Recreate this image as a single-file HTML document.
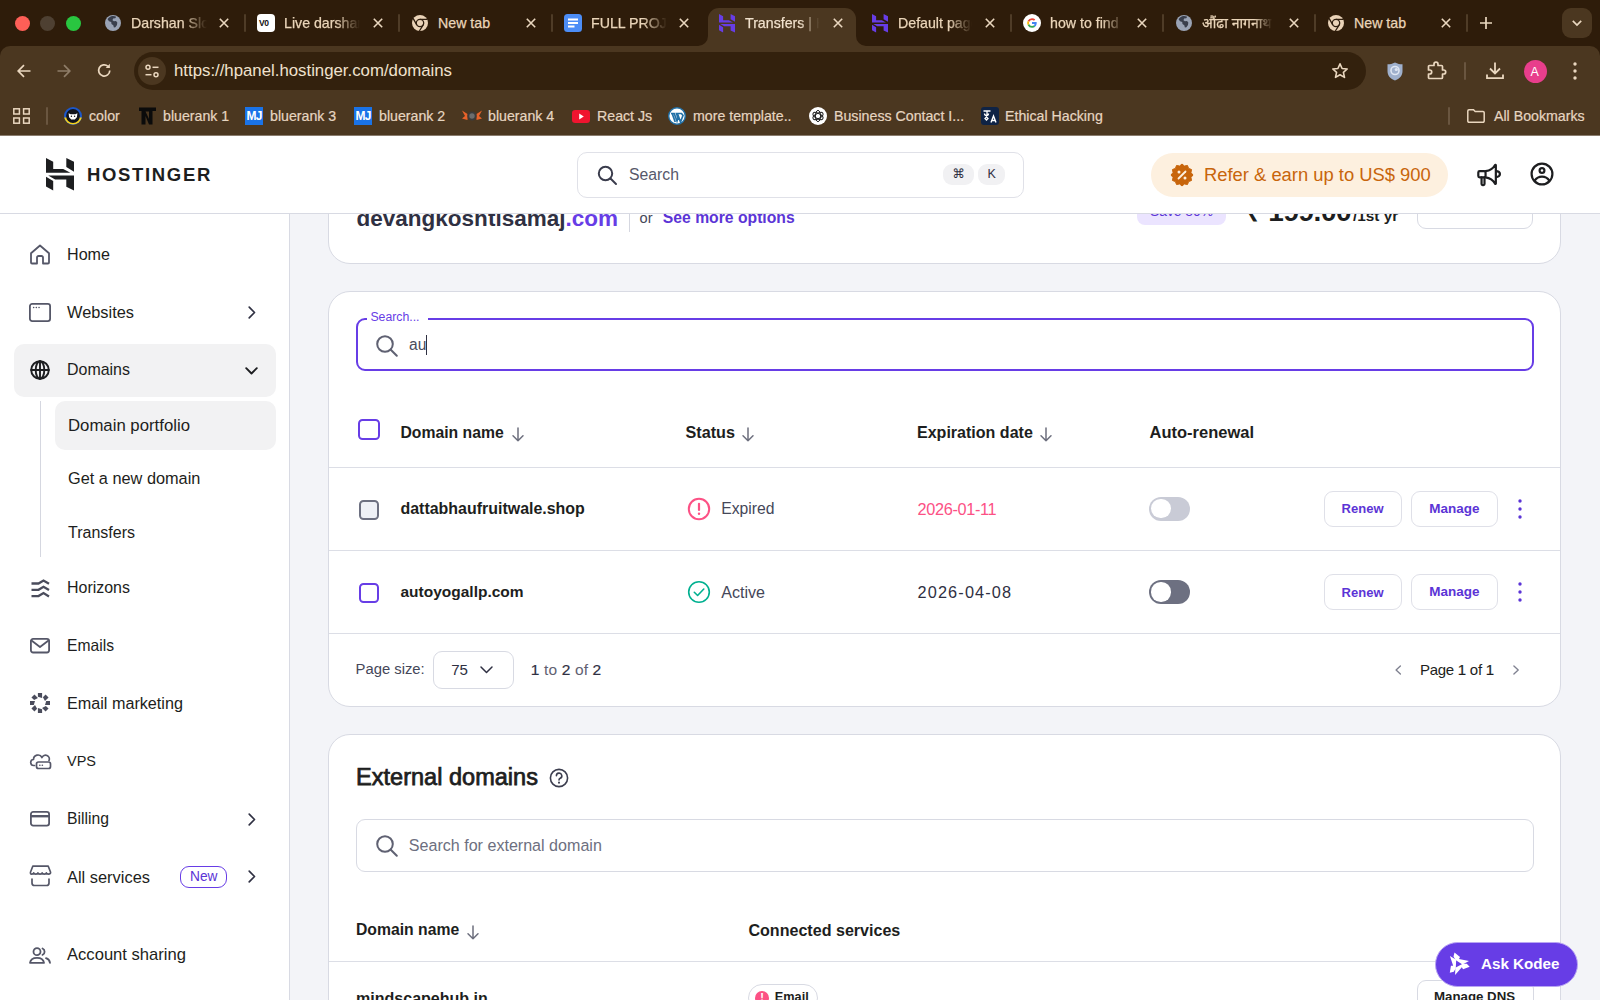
<!DOCTYPE html>
<html lang="en">
<head>
<meta charset="utf-8">
<title>Transfers | Hostinger</title>
<style>
*{box-sizing:border-box;margin:0;padding:0}
html,body{width:1600px;height:1000px;overflow:hidden;background:#f3f4f8}
body{position:relative;font-family:"Liberation Sans","Noto Sans CJK SC",sans-serif;color:#1d1e20;-webkit-font-smoothing:antialiased}
.abs{position:absolute}
.t{position:absolute;white-space:nowrap;line-height:1}
svg{position:absolute;overflow:visible}
/* ---------- browser chrome ---------- */
#tabstrip{position:absolute;left:0;top:0;width:1600px;height:60px;background:#2e1c0a}
#toolbar{position:absolute;left:0;top:46px;width:1600px;height:90px;background:#4b3720;border-radius:10px 10px 0 0}
#chromeline{position:absolute;left:0;top:135px;width:1600px;height:1px;background:#8a7c6d}
.ct{position:absolute;white-space:nowrap;line-height:1;font-size:14.2px;color:#ead5b9;-webkit-text-stroke:.25px #ead5b9;top:16px;overflow:hidden;height:16px}
.cx{position:absolute;top:17px;width:11px;height:11px}
.sep{position:absolute;top:14px;width:2px;height:18px;background:#4f3c27;border-radius:1px}
.bm{position:absolute;white-space:nowrap;line-height:1;font-size:14.2px;color:#e6d5c0;-webkit-text-stroke:.2px #e6d5c0;top:108px}
/* ---------- page ---------- */
#header{position:absolute;left:0;top:136px;width:1600px;height:78px;background:#fff;border-bottom:1px solid #d8dae3}
#sidebar{position:absolute;left:0;top:214px;width:290px;height:786px;background:#fff;border-right:1px solid #d8dae3}
.nav{position:absolute;left:67px;white-space:nowrap;line-height:1;font-size:16.3px;color:#1d1e20}
.sub{position:absolute;left:68px;white-space:nowrap;line-height:1;font-size:16.3px;color:#1d1e20}
.card{position:absolute;left:328px;width:1233px;background:#fff;border:1px solid #dadce5;border-radius:22px}
.hline{position:absolute;left:329px;width:1231px;height:1px;background:#dcdee6}
.b{font-weight:700}
#main{position:absolute;left:0;top:0;width:1600px;height:1000px;overflow:hidden}
</style>
</head>
<body>
<!-- PAGE -->
<div id="main">
<div class="abs" style="left:328px;top:150px;width:1233px;height:113.5px;background:#fff;border:1px solid #d8dae3;border-radius:22px"></div>
<div class="t" style="left:356.5px;top:208.4px;font-size:22.5px;font-weight:700;color:#2f3042;letter-spacing:0.009px;">devangkoshtisamaj<span style="color:#673de6">.com</span></div>
<div class="abs" style="left:628.5px;top:205px;width:1.0px;height:26.5px;background:#d5d7e0"></div>
<div class="t" style="left:639.5px;top:210.9px;font-size:14.62px;font-weight:400;color:#454759;">or</div>
<div class="t" style="left:662.8px;top:210.4px;font-size:15.72px;font-weight:700;color:#5b34d6;">See more options</div>
<div class="abs" style="left:1137px;top:196px;width:89px;height:28.5px;background:#ebe4ff;border-radius:8px"></div>
<div class="t" style="left:1150px;top:204.8px;font-size:13.82px;font-weight:400;color:#5b34d6;">Save 80%</div>
<div class="t" style="left:1245.5px;top:198.2px;font-size:28px;font-weight:700;color:#1d1e20;letter-spacing:-0.482px;">₹ 199.00</div>
<div class="t" style="left:1353px;top:207.5px;font-size:15.37px;font-weight:700;color:#1d1e20;">/1st yr</div>
<div class="abs" style="left:1417px;top:185px;width:116px;height:44px;border:1px solid #d8dae3;border-radius:9px;background:#fff"></div>
<div class="abs" style="left:328px;top:291px;width:1233px;height:415.5px;background:#fff;border:1px solid #d8dae3;border-radius:22px"></div>
<div class="abs" style="left:355.5px;top:317.8px;width:1178.0px;height:53.39999999999998px;border:2px solid #673de6;border-radius:9px;background:#fff"></div>
<div class="abs" style="left:366.5px;top:316px;width:61.0px;height:6px;background:#fff"></div>
<div class="t" style="left:370.4px;top:311.2px;font-size:12.27px;font-weight:400;color:#673de6;">Search...</div>
<svg style="left:375.5px;top:334.5px" width="22" height="22" viewBox="0 0 22 22" fill="none" stroke="#5f6172" stroke-width="2" stroke-linecap="round" stroke-linejoin="round"><circle cx="9" cy="9" r="7.800"/><path d="M14.800 14.800L20.800 20.800"/></svg>
<div class="t" style="left:409px;top:337.4px;font-size:15.6px;font-weight:400;color:#4a4c5c;">au</div>
<div class="abs" style="left:426px;top:335px;width:1.3000000000000114px;height:19.5px;background:#2f3042"></div>
<div class="abs" style="left:358px;top:418.5px;width:21.5px;height:21.5px;border:2px solid #673de6;border-radius:4.500px;background:#fff"></div>
<div class="t" style="left:400.5px;top:424.5px;font-size:15.74px;font-weight:700;color:#1d1e20;">Domain name</div>
<svg style="left:511.79999999999995px;top:427.0px" width="12" height="15" viewBox="0 0 12 15" fill="none" stroke="#6d6f7e" stroke-width="1.500" stroke-linecap="round" stroke-linejoin="round"><path d="M6 1V13.800M1 8.800L6 13.800 11 8.800"/></svg>
<div class="t" style="left:685.5px;top:424.3px;font-size:16.2px;font-weight:700;color:#1d1e20;">Status</div>
<svg style="left:742.3px;top:427.0px" width="12" height="15" viewBox="0 0 12 15" fill="none" stroke="#6d6f7e" stroke-width="1.500" stroke-linecap="round" stroke-linejoin="round"><path d="M6 1V13.800M1 8.800L6 13.800 11 8.800"/></svg>
<div class="t" style="left:917px;top:424.4px;font-size:16.05px;font-weight:700;color:#1d1e20;">Expiration date</div>
<svg style="left:1040.3px;top:427.0px" width="12" height="15" viewBox="0 0 12 15" fill="none" stroke="#6d6f7e" stroke-width="1.500" stroke-linecap="round" stroke-linejoin="round"><path d="M6 1V13.800M1 8.800L6 13.800 11 8.800"/></svg>
<div class="t" style="left:1149.5px;top:424.2px;font-size:16.5px;font-weight:700;color:#1d1e20;">Auto-renewal</div>
<div class="hline" style="top:467px"></div><div class="hline" style="top:550px"></div><div class="hline" style="top:633px"></div>
<div class="abs" style="left:359px;top:499.7px;width:20px;height:20.000000000000057px;border:2px solid #6d7081;border-radius:4.500px;background:#eef0f6"></div>
<div class="t" style="left:400.5px;top:500.6px;font-size:15.96px;font-weight:700;color:#1d1e20;">dattabhaufruitwale.shop</div>
<svg style="left:686.7px;top:496.7px" width="24" height="24" viewBox="0 0 24 24" fill="none" stroke="#fc5185" stroke-width="2" stroke-linecap="round" stroke-linejoin="round"><circle cx="12" cy="12" r="10.200"/><path d="M12 6.800V13" stroke-width="2.200"/><path d="M12 16.600v.1" stroke-width="2.400"/></svg>
<div class="t" style="left:721.2px;top:500.8px;font-size:15.72px;font-weight:400;color:#454759;">Expired</div>
<div class="t" style="left:917.5px;top:500.5px;font-size:16.3px;font-weight:400;color:#fc5185;letter-spacing:-0.329px;">2026-01-11</div>
<div class="abs" style="left:1149px;top:496.5px;width:41px;height:24.399999999999977px;background:#c9cbd6;border-radius:12.500px"></div>
<div class="abs" style="left:1151.3px;top:499.0px;width:19.40000000000009px;height:19.399999999999977px;background:#fff;border-radius:50%"></div>
<div class="abs" style="left:1323.5px;top:491.0px;width:78.0px;height:35.5px;border:1px solid #dfe0e8;border-radius:9px;background:#fff"></div>
<div class="t" style="left:1341.6px;top:502.4px;font-size:13.0px;font-weight:700;color:#5b34d6;">Renew</div>
<div class="abs" style="left:1411px;top:491.0px;width:86.5px;height:35.5px;border:1px solid #dfe0e8;border-radius:9px;background:#fff"></div>
<div class="t" style="left:1429.2px;top:502.1px;font-size:13.51px;font-weight:700;color:#5b34d6;">Manage</div>
<svg style="left:1517.8px;top:498.7px" width="4" height="20" viewBox="0 0 4 20"><circle cx="2" cy="2" r="1.700" fill="#5b34d6"/><circle cx="2" cy="10" r="1.700" fill="#5b34d6"/><circle cx="2" cy="18" r="1.700" fill="#5b34d6"/></svg>
<div class="abs" style="left:359px;top:583px;width:20px;height:20px;border:2px solid #673de6;border-radius:4.500px;background:#fff"></div>
<div class="t" style="left:400.5px;top:584.2px;font-size:15.49px;font-weight:700;color:#1d1e20;">autoyogallp.com</div>
<svg style="left:686.7px;top:580.0px" width="24" height="24" viewBox="0 0 24 24" fill="none" stroke="#00b090" stroke-width="1.6" stroke-linecap="round" stroke-linejoin="round"><circle cx="12" cy="12" r="10.300"/><path d="M7.300 12.300L10.600 15.500 16.800 9"/></svg>
<div class="t" style="left:721.2px;top:583.9px;font-size:16.08px;font-weight:400;color:#454759;">Active</div>
<div class="t" style="left:917.5px;top:583.8px;font-size:16.3px;font-weight:400;color:#2f3042;letter-spacing:1.147px;">2026-04-08</div>
<div class="abs" style="left:1149px;top:579.8px;width:41px;height:24.40000000000009px;background:#6d7081;border-radius:12.500px"></div>
<div class="abs" style="left:1151.3px;top:582.3px;width:19.40000000000009px;height:19.40000000000009px;background:#fff;border-radius:50%"></div>
<div class="abs" style="left:1323.5px;top:574.3px;width:78.0px;height:35.5px;border:1px solid #dfe0e8;border-radius:9px;background:#fff"></div>
<div class="t" style="left:1341.6px;top:585.7px;font-size:13.0px;font-weight:700;color:#5b34d6;">Renew</div>
<div class="abs" style="left:1411px;top:574.3px;width:86.5px;height:35.5px;border:1px solid #dfe0e8;border-radius:9px;background:#fff"></div>
<div class="t" style="left:1429.2px;top:585.4px;font-size:13.51px;font-weight:700;color:#5b34d6;">Manage</div>
<svg style="left:1517.8px;top:582px" width="4" height="20" viewBox="0 0 4 20"><circle cx="2" cy="2" r="1.700" fill="#5b34d6"/><circle cx="2" cy="10" r="1.700" fill="#5b34d6"/><circle cx="2" cy="18" r="1.700" fill="#5b34d6"/></svg>
<div class="t" style="left:355.5px;top:662.3px;font-size:14.84px;font-weight:400;color:#454759;">Page size:</div>
<div class="abs" style="left:433px;top:651.2px;width:81px;height:37.59999999999991px;border:1px solid #d8dae3;border-radius:9px;background:#fff"></div>
<div class="t" style="left:451.2px;top:662.2px;font-size:15.1px;font-weight:400;color:#2f3042;">75</div>
<svg style="left:480px;top:666px" width="13" height="8" viewBox="0 0 13 8"><path d="M1 1L6.500 6.500 12 1" stroke="#2f3042" stroke-width="1.500" fill="none" stroke-linecap="round" stroke-linejoin="round"/></svg>
<div class="t" style="left:530.8px;top:662.0px;font-size:15.5px;font-weight:400;color:#5f6172;letter-spacing:0.145px;"><span style="color:#2f3042;-webkit-text-stroke:.22px #2f3042">1</span> to <span style="color:#2f3042;-webkit-text-stroke:.22px #2f3042">2</span> of <span style="color:#2f3042;-webkit-text-stroke:.22px #2f3042">2</span></div>
<svg style="left:1395px;top:665px" width="6.300" height="9.900" viewBox="0 0 7 11"><path d="M6 1L1.200 5.500 6 10" stroke="#7f8190" stroke-width="1.500" fill="none" stroke-linecap="round" stroke-linejoin="round"/></svg>
<svg style="left:1512.500px;top:665px" width="6.300" height="9.900" viewBox="0 0 7 11"><path d="M1 1L5.800 5.500 1 10" stroke="#7f8190" stroke-width="1.500" fill="none" stroke-linecap="round" stroke-linejoin="round"/></svg>
<div class="t" style="left:1420px;top:662.2px;font-size:15px;font-weight:400;color:#1d1e20;letter-spacing:-0.273px;">Page <span style="-webkit-text-stroke:.22px #1d1e20">1</span> of <span style="-webkit-text-stroke:.22px #1d1e20">1</span></div>
<div class="abs" style="left:328px;top:734px;width:1233px;height:306px;background:#fff;border:1px solid #d8dae3;border-radius:22px"></div>
<div class="t" style="left:356px;top:766.0px;font-size:23.5px;font-weight:400;color:#1d1e20;-webkit-text-stroke:.75px #1d1e20;letter-spacing:0.026px;">External domains</div>
<svg style="left:548.8px;top:767.8px" width="20" height="20" viewBox="0 0 20 20" fill="none" stroke="#3c3e4f" stroke-width="1.6" stroke-linecap="round" stroke-linejoin="round"><circle cx="10" cy="10" r="8.600"/><path d="M7.400 7.800a2.700 2.700 0 1 1 3.800 2.500c-.8.400-1.200.9-1.200 1.700"/><path d="M10 14.600v.1" stroke-width="2"/></svg>
<div class="abs" style="left:356px;top:819.2px;width:1177.5px;height:52.799999999999955px;border:1px solid #d8dae3;border-radius:9px;background:#fff"></div>
<svg style="left:375.5px;top:835.0px" width="22" height="22" viewBox="0 0 22 22" fill="none" stroke="#5f6172" stroke-width="2" stroke-linecap="round" stroke-linejoin="round"><circle cx="9" cy="9" r="7.800"/><path d="M14.800 14.800L20.800 20.800"/></svg>
<div class="t" style="left:408.8px;top:836.8px;font-size:16.09px;font-weight:400;color:#6d6f80;">Search for external domain</div>
<div class="t" style="left:356px;top:922.1px;font-size:15.74px;font-weight:700;color:#1d1e20;">Domain name</div>
<svg style="left:467.2px;top:924.5px" width="12" height="15" viewBox="0 0 12 15" fill="none" stroke="#6d6f7e" stroke-width="1.500" stroke-linecap="round" stroke-linejoin="round"><path d="M6 1V13.800M1 8.800L6 13.800 11 8.800"/></svg>
<div class="t" style="left:748.4px;top:922.0px;font-size:16.08px;font-weight:700;color:#1d1e20;">Connected services</div>
<div class="hline" style="top:961px"></div>
<div class="t" style="left:356px;top:989.7px;font-size:16.05px;font-weight:700;color:#1d1e20;">mindscapehub.in</div>
<div class="abs" style="left:748.4px;top:984px;width:69.60000000000002px;height:28px;border:1px solid #d8dae3;border-radius:14px;background:#fff"></div>
<div class="abs" style="left:754.5px;top:990.5px;width:14.0px;height:14.0px;background:#fc5185;border-radius:50%"></div>
<div class="t" style="left:760.3px;top:992.1px;font-size:11px;font-weight:700;color:#fff;">!</div>
<div class="t" style="left:774.8px;top:990.8px;font-size:12.74px;font-weight:700;color:#1d1e20;">Email</div>
<div class="abs" style="left:1417px;top:980px;width:116.5px;height:40px;border:1px solid #d8dae3;border-radius:9px;background:#fff"></div>
<div class="t" style="left:1434px;top:990.0px;font-size:13.28px;font-weight:700;color:#1d1e20;">Manage DNS</div>
<div class="abs" style="left:1434.7px;top:941.5px;width:143.79999999999995px;height:45.200000000000045px;background:#673de6;border-radius:22.600px;border:1px solid #b9a6f3"></div>
<svg style="left:1445.800px;top:952.300px" width="24" height="24" viewBox="-12 -12 24 24" fill="#fff"><path d="M-3.500 -11.500L2 -7 1 -5 11 -3 4.500 0.500 -2.500 -4 -4.500 -7.500z"/><path d="M-3.500 -11.500L2 -7 1 -5 11 -3 4.500 0.500 -2.500 -4 -4.500 -7.500z" transform="rotate(120)"/><path d="M-3.500 -11.500L2 -7 1 -5 11 -3 4.500 0.500 -2.500 -4 -4.500 -7.500z" transform="rotate(240)"/></svg>
<div class="t" style="left:1481px;top:955.8px;font-size:15.19px;font-weight:700;color:#fff;">Ask Kodee</div>
</div>
<div id="sidebar">
<div class="abs" style="left:14px;top:129.5px;width:261.600px;height:53px;border-radius:10px;background:#f2f2f3"></div>
<div class="abs" style="left:55px;top:187px;width:220.600px;height:48.500px;border-radius:10px;background:#f2f2f3"></div>
<div class="abs" style="left:40px;top:187px;width:1px;height:156px;background:#d5d7e0"></div>
<div class="t" style="left:67px;top:32.4px;font-size:16.12px;font-weight:400;color:#1d1e20;">Home</div>
<div class="t" style="left:67px;top:90.2px;font-size:16.36px;font-weight:400;color:#1d1e20;">Websites</div>
<div class="t" style="left:67px;top:148.4px;font-size:15.96px;font-weight:400;color:#1d1e20;">Domains</div>
<div class="t" style="left:67px;top:366.4px;font-size:15.96px;font-weight:400;color:#1d1e20;">Horizons</div>
<div class="t" style="left:67px;top:423.9px;font-size:15.67px;font-weight:400;color:#1d1e20;">Emails</div>
<div class="t" style="left:67px;top:481.4px;font-size:16.18px;font-weight:400;color:#1d1e20;">Email marketing</div>
<div class="t" style="left:67px;top:540.0px;font-size:14.49px;font-weight:400;color:#1d1e20;">VPS</div>
<div class="t" style="left:67px;top:597.3px;font-size:15.74px;font-weight:400;color:#1d1e20;">Billing</div>
<div class="t" style="left:67px;top:654.6px;font-size:16.42px;font-weight:400;color:#1d1e20;">All services</div>
<div class="t" style="left:67px;top:733.1px;font-size:16.6px;font-weight:400;color:#1d1e20;">Account sharing</div>
<div class="t" style="left:68px;top:204.0px;font-size:16.75px;font-weight:400;color:#1d1e20;">Domain portfolio</div>
<div class="t" style="left:68px;top:256.0px;font-size:16.32px;font-weight:400;color:#1d1e20;">Get a new domain</div>
<div class="t" style="left:68px;top:310.7px;font-size:16.01px;font-weight:400;color:#1d1e20;">Transfers</div>
<svg style="left:247.5px;top:92.0px" width="8" height="13" viewBox="0 0 8 13"><path d="M1.200 1.200L6.500 6.500 1.200 11.800" stroke="#2f3042" stroke-width="1.700" fill="none" stroke-linecap="round" stroke-linejoin="round"/></svg>
<svg style="left:247.5px;top:598.5px" width="8" height="13" viewBox="0 0 8 13"><path d="M1.200 1.200L6.500 6.500 1.200 11.800" stroke="#2f3042" stroke-width="1.700" fill="none" stroke-linecap="round" stroke-linejoin="round"/></svg>
<svg style="left:247.5px;top:656.0px" width="8" height="13" viewBox="0 0 8 13"><path d="M1.200 1.200L6.500 6.500 1.200 11.800" stroke="#2f3042" stroke-width="1.700" fill="none" stroke-linecap="round" stroke-linejoin="round"/></svg>
<svg style="left:245px;top:152.5px" width="13" height="8" viewBox="0 0 13 8"><path d="M1.200 1.200L6.500 6.500 11.800 1.200" stroke="#1d1e20" stroke-width="1.900" fill="none" stroke-linecap="round" stroke-linejoin="round"/></svg>
<div class="abs" style="left:180px;top:652px;width:47px;height:21.500px;border:1.500px solid #673de6;border-radius:9px"></div>
<div class="t" style="left:190px;top:656.0px;font-size:13.74px;font-weight:400;color:#5b34d6;">New</div>
<svg style="left:29.0px;top:29.80000000000001px" width="22" height="21" viewBox="0 0 22 21" fill="none" stroke="#555768" stroke-width="1.8" stroke-linecap="round" stroke-linejoin="round"><path d="M2 9.300L11 1.500 20 9.300V18.500a1 1 0 0 1-1 1H14V13.500a1.500 1.500 0 0 0-1.500-1.500H9.500A1.500 1.500 0 0 0 8 13.500V19.500H3a1 1 0 0 1-1-1z"/></svg>
<svg style="left:29.0px;top:88.80000000000001px" width="22" height="19" viewBox="0 0 22 19" fill="none" stroke="#555768" stroke-width="1.8" stroke-linecap="round" stroke-linejoin="round"><rect x="0.900" y="0.900" width="20.200" height="17.200" rx="2.300"/><path d="M4.600 4.600h.1M7.300 4.600h.1M10 4.600h.1" stroke-width="1.500"/></svg>
<svg style="left:29.0px;top:144.89999999999998px" width="22" height="22" viewBox="0 0 22 22" fill="none" stroke="#1d1e20" stroke-width="1.9" stroke-linecap="round" stroke-linejoin="round"><circle cx="11" cy="11" r="8.800"/><ellipse cx="11" cy="11" rx="4.300" ry="8.800"/><path d="M2.200 11H19.800M11 2.200V19.800"/></svg>
<svg style="left:30.5px;top:364.79999999999995px" width="19" height="19" viewBox="0 0 19 19" fill="none" stroke="#4a4c5c" stroke-width="2.3" stroke-linecap="round" stroke-linejoin="round"><path d="M0.500 4.500H7.500L12.500 1.500 18 4.800M0.500 10.800H7.500L12.500 7.800 18 11.100M0.500 17.100H7.500L12.500 14.100 18 17.400" stroke-linecap="butt" stroke-linejoin="miter"/></svg>
<svg style="left:30.0px;top:423.90000000000003px" width="20" height="15.4" viewBox="0 0 20 15.4" fill="none" stroke="#555768" stroke-width="1.8" stroke-linecap="round" stroke-linejoin="round"><rect x="0.900" y="0.900" width="18.200" height="13.600" rx="2.200"/><path d="M1.500 2.500L10 9 18.500 2.500"/></svg>
<svg style="left:29px;top:478px" width="22" height="22" viewBox="-11 -11 22 22" fill="#4a4c5c"><path d="M-2.100 -10H2.100V-5L-2.100 -6.200z" transform="rotate(0)"/><path d="M-2.100 -10H2.100V-5L-2.100 -6.200z" transform="rotate(45)"/><path d="M-2.100 -10H2.100V-5L-2.100 -6.200z" transform="rotate(90)"/><path d="M-2.100 -10H2.100V-5L-2.100 -6.200z" transform="rotate(135)"/><path d="M-2.100 -10H2.100V-5L-2.100 -6.200z" transform="rotate(180)"/><path d="M-2.100 -10H2.100V-5L-2.100 -6.200z" transform="rotate(225)"/><path d="M-2.100 -10H2.100V-5L-2.100 -6.200z" transform="rotate(270)"/><path d="M-2.100 -10H2.100V-5L-2.100 -6.200z" transform="rotate(315)"/></svg>
<svg style="left:29.5px;top:536.7px" width="21" height="19" viewBox="0 0 21 19" fill="none" stroke="#555768" stroke-width="1.7" stroke-linecap="round" stroke-linejoin="round"><path d="M4.500 14.500H4a3 3 0 0 1-.5-6A4.500 4.500 0 0 1 12 6.500 3.800 3.800 0 0 1 19 9.500"/><rect x="6.500" y="11" width="14" height="6.500" rx="2"/><path d="M9.800 14.300h.1M12.300 14.300h.1" stroke-width="1.600"/></svg>
<svg style="left:29.799999999999997px;top:597.05px" width="20" height="15.5" viewBox="0 0 20 15.5" fill="none" stroke="#555768" stroke-width="1.8" stroke-linecap="round" stroke-linejoin="round"><rect x="0.900" y="0.900" width="18.200" height="13.700" rx="2.300"/><path d="M1 5.200H19" stroke-width="2.400" stroke-linecap="butt"/></svg>
<svg style="left:28.5px;top:651.2px" width="23" height="22" viewBox="0 0 23 22" fill="none" stroke="#555768" stroke-width="1.7" stroke-linecap="round" stroke-linejoin="round"><path d="M3.500 1.200H19.500L22 7.500c0 1.300-1 2-2.200 2s-2.200-.7-2.200-1.300c0 .6-1 1.300-2.200 1.300S13.200 8.800 13.200 8.200c0 .6-1 1.300-2.200 1.300S8.800 8.800 8.800 8.200c0 .6-1 1.300-2.200 1.300S4.400 8.800 4.400 8.200c0 .6-1 1.300-2.200 1.300S1 8.800 1 7.500z" transform="scale(.96) translate(.5 0)"/><path d="M3 14V18a2.500 2.500 0 0 0 2.500 2.500H17.500A2.500 2.500 0 0 0 20 18V14"/></svg>
<svg style="left:29.0px;top:732.8px" width="22" height="17" viewBox="0 0 22 17" fill="none" stroke="#555768" stroke-width="1.8" stroke-linecap="round" stroke-linejoin="round"><circle cx="8" cy="4.700" r="3.500"/><path d="M1 15.800c.5-3.500 3.500-5 7-5s6.500 1.500 7 5z"/><path d="M13.500 1.500a3.500 3.500 0 0 1 0 6.400M17 11.200c2.300.8 3.700 2.300 4 4.600"/></svg>
</div>
<div id="header">
<svg style="left:45.700px;top:22.099999999999994px" width="28" height="32.500" viewBox="0 0 28 32.500" fill="#1d1e20"><path d="M0 0L7.200 3.750V10.900H17.200L24.400 14.700H0z"/><path d="M20.300 0L28 3.750V13.750L20.300 9.100z"/><path d="M28 32.500L20.300 28.750V21.600H9.100L2.200 17.500H28z"/><path d="M0 18.750L7.200 23.100V32.500L0 28.400z"/></svg>
<div class="t" style="left:86.9px;top:29.6px;font-size:18.5px;font-weight:700;color:#1d1e20;letter-spacing:1.676px;">HOSTINGER</div>
<div class="abs" style="left:577px;top:15.5px;width:446.500px;height:46px;border:1px solid #e0e1e8;border-radius:10px;background:#fff"></div>
<svg style="left:596.5px;top:28.5px" width="20" height="20" viewBox="0 0 20 20" fill="none" stroke="#3a3c4c" stroke-width="2" stroke-linecap="round" stroke-linejoin="round"><circle cx="8.500" cy="8.500" r="6.700"/><path d="M13.500 13.500L19 19"/></svg>
<div class="t" style="left:629px;top:30.8px;font-size:15.78px;font-weight:400;color:#56586a;">Search</div>
<div class="abs" style="left:943px;top:27.5px;width:30.500px;height:21.500px;border-radius:9px;background:#f1f1f3"></div>
<div class="abs" style="left:978px;top:27.5px;width:27px;height:21.500px;border-radius:9px;background:#f1f1f3"></div>
<div class="t" style="left:952.500px;top:31.5px;font-size:12.500px;color:#2f3042;font-family:'DejaVu Sans','Liberation Sans',sans-serif">&#8984;</div>
<div class="t" style="left:987.5px;top:32.4px;font-size:12.5px;font-weight:400;color:#2f3042;">K</div>
<div class="abs" style="left:1151px;top:16.5px;width:297px;height:44px;border-radius:22px;background:#fdf0df"></div>
<svg style="left:1171px;top:27.5px" width="22" height="22" viewBox="0 0 22 22"><polygon points="22.00,11.00 19.98,13.41 20.53,16.50 17.58,17.58 16.50,20.53 13.41,19.98 11.00,22.00 8.59,19.98 5.50,20.53 4.42,17.58 1.47,16.50 2.02,13.41 0.00,11.00 2.02,8.59 1.47,5.50 4.42,4.42 5.50,1.47 8.59,2.02 11.00,0.00 13.41,2.02 16.50,1.47 17.58,4.42 20.53,5.50 19.98,8.59" fill="#c8650b" stroke="#c8650b" stroke-width="1" stroke-linejoin="round"/><path d="M14.500 7.500L7.500 14.500" stroke="#fdf0df" stroke-width="1.800" stroke-linecap="round"/><circle cx="8" cy="8" r="1.500" fill="#fdf0df"/><circle cx="14" cy="14" r="1.500" fill="#fdf0df"/></svg>
<div class="t" style="left:1204px;top:29.6px;font-size:18.39px;font-weight:400;color:#c8650b;">Refer &amp; earn up to US$ 900</div>
<svg style="left:1475.6499999999999px;top:25.800000000000004px" width="27.3" height="25.2" viewBox="0 0 26 24" fill="none" stroke="#1d1e20" stroke-width="2.1" stroke-linecap="round" stroke-linejoin="round"><rect x="2.200" y="8.700" width="6.900" height="5.900" rx="1.300"/><path d="M5.300 14.600V21a1 1 0 0 0 1 1H7.100a1 1 0 0 0 1-1V14.600"/><path d="M9.100 8.700C13 8.200 16.500 6 18.200 2.900a.4.400 0 0 1 .7.200V20.500a.4.400 0 0 1-.7.200C16.500 17.600 13 15.100 9.100 14.600"/><path d="M19.200 8.600a3.600 2.900 0 0 1 0 5.800"/></svg>
<svg style="left:1530.3px;top:26.400000000000006px" width="24" height="24" viewBox="0 0 24 24" fill="none" stroke="#1d1e20" stroke-width="2.2" stroke-linecap="round" stroke-linejoin="round"><circle cx="12" cy="12" r="10.400"/><circle cx="12" cy="8.500" r="2.400"/><path d="M4.700 18.600C6.500 15.800 9 14.600 12 14.600S17.500 15.800 19.300 18.600"/></svg>
</div>
<!-- CHROME -->
<div id="tabstrip">
<div class="abs" style="left:15px;top:15.500px;width:15px;height:15px;border-radius:50%;background:#fe5f57"></div>
<div class="abs" style="left:40px;top:15.500px;width:15px;height:15px;border-radius:50%;background:#4e4032"></div>
<div class="abs" style="left:65.500px;top:15.500px;width:15px;height:15px;border-radius:50%;background:#29c640"></div>
<svg style="left:105px;top:15px" width="16" height="16" viewBox="0 0 16 16"><circle cx="8" cy="8" r="8" fill="#9aa3b5"/><path d="M6.2 1.2c1.6-.5 3.6-.3 5 .6l-.9 1.5-2.2.3-.6 1.6 1.4 1 2.1-.2 1.3 1.6-.3 2.4-1.6 2.3-1.5.2-.6-2.2-1.8-1.2-.3-2L4 6.300 2.600 4.200c.8-1.400 2.100-2.500 3.600-3z" fill="#3a3f4d"/></svg>
<div class="ct" style="left:131px;width:76px;-webkit-mask-image:linear-gradient(90deg,#000 68%,transparent 100%)">Darshan Slot Booking</div>
<svg style="left:219px;top:18px" width="10" height="10" viewBox="0 0 10 10"><path d="M0.8 0.8 L9.2 9.2 M9.2 0.8 L0.8 9.2" stroke="#ead7bf" stroke-width="1.6" fill="none"/></svg>
<div class="sep" style="left:244px"></div>
<div class="abs" style="left:257px;top:14px;width:18px;height:18px;border-radius:4px;background:#fff"></div>
<div class="t" style="left:259px;top:19px;font-size:8.500px;font-weight:700;color:#111;letter-spacing:-.5px">V0</div>
<div class="ct" style="left:284px;width:76px;-webkit-mask-image:linear-gradient(90deg,#000 68%,transparent 100%)">Live darshan</div>
<svg style="left:373px;top:18px" width="10" height="10" viewBox="0 0 10 10"><path d="M0.8 0.8 L9.2 9.2 M9.2 0.8 L0.8 9.2" stroke="#ead7bf" stroke-width="1.6" fill="none"/></svg>
<div class="sep" style="left:398px"></div>
<svg style="left:412px;top:15px" width="16" height="16" viewBox="0 0 16 16"><circle cx="8" cy="8" r="8" fill="#ead3b8"/><circle cx="8" cy="8" r="3.700" fill="none" stroke="#2e1e0f" stroke-width="1.300"/><path d="M8 4.300H15.500M4.800 9.850L1.100 3.400M11.200 9.850L7.400 16" stroke="#2e1e0f" stroke-width="1.300" fill="none"/></svg>
<div class="ct" style="left:438px;width:76px">New tab</div>
<svg style="left:526px;top:18px" width="10" height="10" viewBox="0 0 10 10"><path d="M0.8 0.8 L9.2 9.2 M9.2 0.8 L0.8 9.2" stroke="#ead7bf" stroke-width="1.6" fill="none"/></svg>
<div class="sep" style="left:551px"></div>
<svg style="left:564px;top:14px" width="18" height="18" viewBox="0 0 18 18"><rect width="18" height="18" rx="3.500" fill="#4c8df6"/><path d="M4 5.500h10M4 9h10M4 12.500h6.500" stroke="#fff" stroke-width="1.800"/></svg>
<div class="ct" style="left:591px;width:76px;-webkit-mask-image:linear-gradient(90deg,#000 68%,transparent 100%)">FULL PROJECT</div>
<svg style="left:679px;top:18px" width="10" height="10" viewBox="0 0 10 10"><path d="M0.8 0.8 L9.2 9.2 M9.2 0.8 L0.8 9.2" stroke="#ead7bf" stroke-width="1.6" fill="none"/></svg>
<!-- active tab -->
<div class="abs" style="left:708px;top:8px;width:148px;height:38px;background:#4b3720;border-radius:11px 11px 0 0"></div>
<svg style="left:698px;top:36px" width="10" height="10" viewBox="0 0 10 10"><path d="M10 0V10H0A10 10 0 0 0 10 0z" fill="#4b3720"/></svg>
<svg style="left:856px;top:36px" width="10" height="10" viewBox="0 0 10 10"><path d="M0 0V10H10A10 10 0 0 1 0 0z" fill="#4b3720"/></svg>
<svg style="left:719px;top:14px" width="16" height="18.600" viewBox="0 0 28 32.500" fill="#673de6"><path d="M0 0L7.200 3.750V10.900H17.200L24.400 14.700H0z"/><path d="M20.300 0L28 3.750V13.750L20.300 9.100z"/><path d="M28 32.500L20.300 28.750V21.600H9.100L2.200 17.500H28z"/><path d="M0 18.750L7.200 23.100V32.500L0 28.400z"/></svg>
<div class="ct" style="left:745px;width:76px;color:#f3e6d5;-webkit-mask-image:linear-gradient(90deg,#000 72%,transparent 98%)">Transfers | Hostinger</div>
<svg style="left:833px;top:18px" width="10" height="10" viewBox="0 0 10 10"><path d="M0.8 0.8 L9.2 9.2 M9.2 0.8 L0.8 9.2" stroke="#ead7bf" stroke-width="1.6" fill="none"/></svg>
<svg style="left:872px;top:14px" width="16" height="18.600" viewBox="0 0 28 32.500" fill="#673de6"><path d="M0 0L7.200 3.750V10.900H17.200L24.400 14.700H0z"/><path d="M20.300 0L28 3.750V13.750L20.300 9.100z"/><path d="M28 32.500L20.300 28.750V21.600H9.100L2.200 17.500H28z"/><path d="M0 18.750L7.200 23.100V32.500L0 28.400z"/></svg>
<div class="ct" style="left:898px;width:74px;-webkit-mask-image:linear-gradient(90deg,#000 68%,transparent 100%)">Default page</div>
<svg style="left:985px;top:18px" width="10" height="10" viewBox="0 0 10 10"><path d="M0.8 0.8 L9.2 9.2 M9.2 0.8 L0.8 9.2" stroke="#ead7bf" stroke-width="1.6" fill="none"/></svg>
<div class="sep" style="left:1010px"></div>
<svg style="left:1023px;top:14px" width="18" height="18" viewBox="0 0 18 18"><circle cx="9" cy="9" r="9" fill="#fff"/><path d="M9 4.200a4.800 4.800 0 0 1 3.300 1.300l-1.300 1.300A3 3 0 0 0 9 6c-1.300 0-2.400.8-2.800 2L4.700 6.800A4.800 4.800 0 0 1 9 4.200z" fill="#ea4335"/><path d="M6.200 8a3 3 0 0 0 0 2l-1.500 1.200a4.800 4.800 0 0 1 0-4.400z" fill="#fbbc05"/><path d="M9 13.800a4.800 4.800 0 0 1-4.300-2.600L6.200 10c.4 1.200 1.500 2 2.800 2 .7 0 1.300-.2 1.800-.5l1.500 1.200A4.800 4.800 0 0 1 9 13.800z" fill="#34a853"/><path d="M13.700 9c0-.3 0-.6-.1-.9H9v1.800h2.600c-.1.600-.4 1.100-.9 1.500l1.500 1.200c.9-.8 1.500-2.100 1.500-3.600z" fill="#4285f4"/></svg>
<div class="ct" style="left:1050px;width:74px;-webkit-mask-image:linear-gradient(90deg,#000 70%,transparent 100%)">how to find</div>
<svg style="left:1137px;top:18px" width="10" height="10" viewBox="0 0 10 10"><path d="M0.8 0.8 L9.2 9.2 M9.2 0.8 L0.8 9.2" stroke="#ead7bf" stroke-width="1.6" fill="none"/></svg>
<div class="sep" style="left:1162px"></div>
<svg style="left:1176px;top:15px" width="16" height="16" viewBox="0 0 16 16"><circle cx="8" cy="8" r="8" fill="#9aa3b5"/><path d="M6.2 1.2c1.6-.5 3.6-.3 5 .6l-.9 1.5-2.2.3-.6 1.6 1.4 1 2.1-.2 1.3 1.6-.3 2.4-1.6 2.3-1.5.2-.6-2.2-1.8-1.2-.3-2L4 6.300 2.600 4.200c.8-1.400 2.100-2.500 3.600-3z" fill="#3a3f4d"/></svg>
<div class="ct" style="left:1202px;width:72px;top:13px;height:20px;font-size:14px;line-height:20px;font-family:'Liberation Sans','Noto Sans Devanagari','Lohit Devanagari',sans-serif;-webkit-mask-image:linear-gradient(90deg,#000 72%,transparent 98%)">औंढा नागनाथ मंदिर</div>
<svg style="left:1289px;top:18px" width="10" height="10" viewBox="0 0 10 10"><path d="M0.8 0.8 L9.2 9.2 M9.2 0.8 L0.8 9.2" stroke="#ead7bf" stroke-width="1.6" fill="none"/></svg>
<div class="sep" style="left:1314px"></div>
<svg style="left:1328px;top:15px" width="16" height="16" viewBox="0 0 16 16"><circle cx="8" cy="8" r="8" fill="#ead3b8"/><circle cx="8" cy="8" r="3.700" fill="none" stroke="#2e1e0f" stroke-width="1.300"/><path d="M8 4.300H15.500M4.800 9.850L1.100 3.400M11.200 9.850L7.400 16" stroke="#2e1e0f" stroke-width="1.300" fill="none"/></svg>
<div class="ct" style="left:1354px;width:76px">New tab</div>
<svg style="left:1441px;top:18px" width="10" height="10" viewBox="0 0 10 10"><path d="M0.8 0.8 L9.2 9.2 M9.2 0.8 L0.8 9.2" stroke="#ead7bf" stroke-width="1.6" fill="none"/></svg>
<div class="sep" style="left:1466px"></div>
<svg style="left:1480px;top:17px" width="12" height="12" viewBox="0 0 12 12"><path d="M6 0V12M0 6H12" stroke="#ead7bf" stroke-width="1.700"/></svg>
<div class="abs" style="left:1562px;top:8px;width:30px;height:30px;border-radius:9px;background:#4b3720"></div>
<svg style="left:1572px;top:20px" width="10" height="6" viewBox="0 0 10 6"><path d="M0.800 0.800L5 5l4.200-4.200" stroke="#ead7bf" stroke-width="1.700" fill="none"/></svg>
</div>
<div id="toolbar">
<!-- nav arrows (toolbar local coords: top = 46) -->
<svg style="left:17px;top:18px" width="14" height="14" viewBox="0 0 14 14"><path d="M13.500 7H1.500M7 1.200L1.200 7 7 12.800" stroke="#ead7bf" stroke-width="1.700" fill="none"/></svg>
<svg style="left:57px;top:18px" width="14" height="14" viewBox="0 0 14 14"><path d="M0.500 7H12.500M7 1.200L12.800 7 7 12.800" stroke="#8f7d68" stroke-width="1.700" fill="none"/></svg>
<svg style="left:97px;top:17px" width="15" height="15" viewBox="0 0 15 15"><path d="M12.800 7.500A5.600 5.600 0 1 1 11 3.300" stroke="#ead7bf" stroke-width="1.700" fill="none"/><path d="M12.900 0.800V5H8.700z" fill="#ead7bf"/></svg>
<!-- url pill -->
<div class="abs" style="left:134px;top:6px;width:1232px;height:38px;border-radius:19px;background:#33210d"></div>
<div class="abs" style="left:138px;top:11px;width:28px;height:28px;border-radius:50%;background:#4b3720"></div>
<svg style="left:145px;top:18px" width="14" height="14" viewBox="0 0 14 14"><circle cx="3" cy="3.300" r="2" fill="none" stroke="#ead7bf" stroke-width="1.500"/><path d="M7.500 3.300H13.500" stroke="#ead7bf" stroke-width="1.500"/><circle cx="11" cy="10.700" r="2" fill="none" stroke="#ead7bf" stroke-width="1.500"/><path d="M0.500 10.700H6.500" stroke="#ead7bf" stroke-width="1.500"/></svg>
<div class="t" style="left:174px;top:17px;font-size:16.800px;color:#f0e1cd">https://hpanel.hostinger.com/domains</div>
<svg style="left:1331px;top:16px" width="18" height="18" viewBox="0 0 18 18"><path d="M9 1.800l2.100 4.700 5.100.5-3.800 3.400 1.100 5L9 12.800l-4.500 2.600 1.100-5L1.800 7l5.100-.5z" stroke="#ead7bf" stroke-width="1.600" fill="none" stroke-linejoin="round"/></svg>
<!-- shield ext -->
<svg style="left:1387px;top:16px" width="16" height="19" viewBox="0 0 16 19"><path d="M8 0.500c2.500 1.300 5 1.800 7.500 1.800v7c0 4.500-3 7.500-7.500 9.200C3.500 16.800.5 13.800.5 9.300v-7C3 2.300 5.500 1.800 8 .5z" fill="#9fb0cc"/><circle cx="8" cy="8.500" r="4" fill="none" stroke="#dfe6f2" stroke-width="1.600"/><circle cx="9.300" cy="7.500" r="1.600" fill="#dfe6f2"/></svg>
<!-- puzzle -->
<svg style="left:1427px;top:15px" width="19" height="19" viewBox="0 0 19 19"><path d="M7 3.200a2 2 0 0 1 4 0V4.500h3.500a1 1 0 0 1 1 1V9h1.200a2 2 0 0 1 0 4H15.500v3.500a1 1 0 0 1-1 1H2.500a1 1 0 0 1-1-1V13h1.200a2 2 0 0 0 0-4H1.500V5.500a1 1 0 0 1 1-1H7z" stroke="#ead7bf" stroke-width="1.700" fill="none" stroke-linejoin="round"/></svg>
<div class="abs" style="left:1464px;top:16px;width:2px;height:18px;background:#6a5640;border-radius:1px"></div>
<!-- download -->
<svg style="left:1486px;top:16px" width="18" height="18" viewBox="0 0 18 18"><path d="M9 0.500V11M4 6.500l5 5 5-5" stroke="#ead7bf" stroke-width="1.800" fill="none"/><path d="M1 12.500V16.200H17V12.500" stroke="#ead7bf" stroke-width="1.800" fill="none"/></svg>
<div class="abs" style="left:1524px;top:14px;width:23px;height:23px;border-radius:50%;background:#e83e8c"></div>
<div class="t" style="left:1530.500px;top:19.500px;font-size:12.500px;color:#fff">A</div>
<svg style="left:1573px;top:16px" width="4" height="18" viewBox="0 0 4 18"><circle cx="2" cy="2" r="1.700" fill="#ead7bf"/><circle cx="2" cy="9" r="1.700" fill="#ead7bf"/><circle cx="2" cy="16" r="1.700" fill="#ead7bf"/></svg>
<!-- bookmarks bar (toolbar local: y = abs-46) -->
<svg style="left:13px;top:61.7px" width="17" height="16" viewBox="0 0 17 16"><rect x="0.800" y="0.800" width="5.600" height="5.200" fill="none" stroke="#ead7bf" stroke-width="1.500"/><rect x="10.600" y="0.800" width="5.600" height="5.200" fill="none" stroke="#ead7bf" stroke-width="1.500"/><rect x="0.800" y="10" width="5.600" height="5.200" fill="none" stroke="#ead7bf" stroke-width="1.500"/><rect x="10.600" y="10" width="5.600" height="5.200" fill="none" stroke="#ead7bf" stroke-width="1.500"/></svg>
<div class="abs" style="left:46px;top:60.7px;width:2px;height:18px;background:#6a5640;border-radius:1px"></div>
<!-- color -->
<svg style="left:64px;top:60.700px" width="18" height="18" viewBox="0 0 18 18"><circle cx="9" cy="9" r="9" fill="#1c57c9"/><path d="M0.200 10.500A9 9 0 0 0 17.800 10.500z" fill="#f6d21c"/><circle cx="9" cy="9" r="6.900" fill="#10131c"/><path d="M4.600 6.200l2 1.100h4.800l2-1.100-.5 4-2.100 2.300H7.200l-2.100-2.300z" fill="#fff"/><circle cx="7.400" cy="9.300" r=".7" fill="#10131c"/><circle cx="10.600" cy="9.300" r=".7" fill="#10131c"/></svg>
<div class="bm" style="left:89px;top:62.7px">color</div>
<!-- bluerank 1 -->
<svg style="left:139px;top:60.7px" width="17" height="18" viewBox="0 0 17 18"><path d="M0 0.500H17V4H13.500V17.500H10L6.500 9V17.500H2.500V4H0z" fill="#0b0b0b"/><path d="M6.500 4.500L10 12V4.500" fill="#4b3720"/></svg>
<div class="bm" style="left:163px;top:62.7px">bluerank 1</div>
<div class="abs" style="left:245px;top:60.7px;width:18px;height:18px;background:#1a73e8"></div>
<div class="t" style="left:246.500px;top:63.7px;font-size:12px;font-weight:700;color:#fff;letter-spacing:-.8px">MJ</div>
<div class="bm" style="left:270px;top:62.7px">bluerank 3</div>
<div class="abs" style="left:354px;top:60.7px;width:18px;height:18px;background:#1a73e8"></div>
<div class="t" style="left:355.500px;top:63.7px;font-size:12px;font-weight:700;color:#fff;letter-spacing:-.8px">MJ</div>
<div class="bm" style="left:379px;top:62.7px">bluerank 2</div>
<!-- bluerank 4 -->
<svg style="left:462px;top:62.7px" width="20" height="14" viewBox="0 0 20 14"><path d="M0 1.500l5.500 3.500v6L0 9.500l3 -2.500zM20 1.500L14.500 5v6L20 9.500l-3-2.500z" fill="#e8622a"/><circle cx="10" cy="7" r="4.600" fill="#3b3b3b"/><circle cx="10" cy="7" r="2.700" fill="#6d6d6d"/></svg>
<div class="bm" style="left:488px;top:62.7px">bluerank 4</div>
<!-- youtube -->
<svg style="left:572px;top:63.7px" width="18" height="13" viewBox="0 0 18 13"><rect width="18" height="13" rx="3.200" fill="#f0142f"/><path d="M7.200 3.600L11.800 6.500 7.200 9.400z" fill="#fff"/></svg>
<div class="bm" style="left:597px;top:62.7px">React Js</div>
<!-- wordpress -->
<svg style="left:668px;top:60.7px" width="18" height="18" viewBox="0 0 18 18"><circle cx="9" cy="9" r="8.300" fill="#fff" stroke="#2271a8" stroke-width="1.400"/><path d="M3 6.500h3.200L9 14l1-3-1.500-4.500H13.500L15 8.500l-2.500 6.500-2.700-7.500M4.200 6.500L7.200 15" stroke="#2271a8" stroke-width="1.700" fill="none"/></svg>
<div class="bm" style="left:693px;top:62.7px">more template..</div>
<!-- chatgpt -->
<svg style="left:809px;top:60.7px" width="18" height="18" viewBox="0 0 18 18"><circle cx="9" cy="9" r="9" fill="#fff"/><g fill="none" stroke="#222" stroke-width="1"><ellipse cx="9" cy="9" rx="2.600" ry="5.600"/><ellipse cx="9" cy="9" rx="2.600" ry="5.600" transform="rotate(60 9 9)"/><ellipse cx="9" cy="9" rx="2.600" ry="5.600" transform="rotate(120 9 9)"/></g></svg>
<div class="bm" style="left:834px;top:62.7px">Business Contact I...</div>
<!-- translate -->
<svg style="left:981px;top:60.7px" width="18" height="18" viewBox="0 0 18 18"><rect width="18" height="18" rx="3" fill="#0f2345"/><path d="M2.500 4h7M6 4v4M3.500 6.500a2 2 0 1 0 4 0M4 11.500l1.500 1.500L7 11.500 5.500 10z" stroke="#fff" stroke-width="1.300" fill="none"/><path d="M10 15.500l2.500-6.500 2.500 6.500M11 13.500h3" stroke="#fff" stroke-width="1.400" fill="none"/></svg>
<div class="bm" style="left:1005px;top:62.7px">Ethical Hacking</div>
<div class="abs" style="left:1448px;top:60.7px;width:2px;height:18px;background:#6a5640;border-radius:1px"></div>
<svg style="left:1467px;top:62.7px" width="18" height="14" viewBox="0 0 18 14"><path d="M0.800 2a1.200 1.200 0 0 1 1.200-1.200H6.500L8.200 2.500H16a1.200 1.200 0 0 1 1.200 1.200V12a1.200 1.200 0 0 1-1.200 1.200H2A1.200 1.200 0 0 1 .8 12z" stroke="#ead7bf" stroke-width="1.500" fill="none"/></svg>
<div class="bm" style="left:1494px;top:62.7px">All Bookmarks</div>
</div>
<div id="chromeline"></div>

</body>
</html>
